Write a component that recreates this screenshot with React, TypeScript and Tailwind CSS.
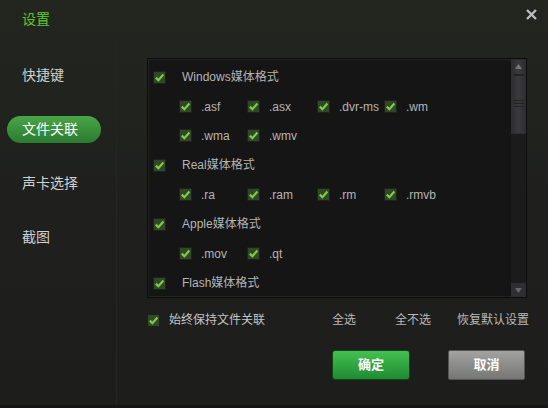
import React from "react";

const FONT = { fontFamily: '"Liberation Sans", "Noto Sans CJK SC", sans-serif' };

function Check() {
  return (
    <span className="flex h-[13px] w-[13px] shrink-0 items-center justify-center border border-[#1b2416] bg-[#33452a]">
      <svg width="11" height="11" viewBox="0 0 11 11">
        <path d="M1.8 5.6 L4.4 8.2 L9.4 2.6" fill="none" stroke="#79d13f" strokeWidth="2.2" />
      </svg>
    </span>
  );
}

const groups = [
  { title: "Windows媒体格式", rows: [[".asf", ".asx", ".dvr-ms", ".wm"], [".wma", ".wmv"]] },
  { title: "Real媒体格式", rows: [[".ra", ".ram", ".rm", ".rmvb"]] },
  { title: "Apple媒体格式", rows: [[".mov", ".qt"]] },
  { title: "Flash媒体格式", rows: [] as string[][] },
];

const colW = ["w-[68px]", "w-[70px]", "w-[67px]", "w-[68px]"];

const menu = ["快捷键", "文件关联", "声卡选择", "截图"];

export default function App() {
  return (
    <div
      className="relative flex h-[408px] w-[548px] flex-col overflow-hidden border-b-[3px] border-[#151515] bg-gradient-to-b from-[#23261f] via-[#1f201d] to-[#1d1d1b] text-[#cfcfcf]"
      style={FONT}
    >
      {/* header */}
      <div className="flex h-[40px] items-center pl-[22px] pb-[1px]">
        <span className="text-[14px] text-[#62c52d]">设置</span>
      </div>
      <button className="absolute right-[9px] top-[6px] flex h-[16px] w-[16px] items-center justify-center">
        <svg width="11" height="11" viewBox="0 0 11 11">
          <path d="M1 1 L10 10 M10 1 L1 10" stroke="#bdbdbd" strokeWidth="2.4" />
        </svg>
      </button>

      <div className="flex flex-1">
        {/* sidebar */}
        <div className="flex w-[117px] shrink-0 flex-col border-r border-[#252623] pt-[22px]">
          {menu.map((m, i) => (
            <div key={m} className="flex h-[54px] items-start">
              {i === 1 ? (
                <div className="ml-[7px] flex h-[27px] w-[94px] items-center rounded-full bg-gradient-to-b from-[#4aa548] to-[#2a7c30] pl-[15px] text-[14px] text-white">
                  {m}
                </div>
              ) : (
                <div className="flex h-[27px] items-center pl-[22px] text-[14px] text-[#d0d0d0]">{m}</div>
              )}
            </div>
          ))}
        </div>

        {/* content */}
        <div className="flex flex-col pl-[30px] pt-[18px]">
          <div className="flex h-[240px] w-[380px] border border-[#0c0c0c] bg-[#151515] shadow-[inset_0_0_0_1px_#222]">
            <div className="flex flex-1 flex-col overflow-hidden pt-[3px] text-[12px] text-[#b4b4b4]">
              {groups.map((g) => (
                <React.Fragment key={g.title}>
                  <div className="flex h-[30px] shrink-0 items-center pl-[5px]">
                    <Check />
                    <span className="ml-[16px]">{g.title}</span>
                  </div>
                  {g.rows.map((r, ri) => (
                    <div key={ri} className="flex h-[29px] shrink-0 items-center pl-[31px]">
                      {r.map((e, ei) => (
                        <div key={e} className={`flex items-center ${colW[ei]}`}>
                          <Check />
                          <span className="ml-[9px]">{e}</span>
                        </div>
                      ))}
                    </div>
                  ))}
                </React.Fragment>
              ))}
            </div>
            {/* scrollbar */}
            <div className="flex w-[15px] shrink-0 flex-col bg-[#1b1b1b]">
              <div className="flex h-[75px] flex-col items-center border border-[#2e2e2e] bg-gradient-to-r from-[#2f2f32] via-[#3a3a3e] to-[#2f2f32]">
                <svg width="7" height="5" viewBox="0 0 7 5" className="mt-[4px]">
                  <path d="M0 5 L3.5 0 L7 5 Z" fill="#777" />
                </svg>
                <div className="mt-[5px] h-[2px] w-[10px] border-y border-[#222]" />
                <div className="mt-[24px] flex flex-col gap-[2px]">
                  <div className="h-[1px] w-[10px] bg-[#222]" />
                  <div className="h-[1px] w-[10px] bg-[#222]" />
                  <div className="h-[1px] w-[10px] bg-[#222]" />
                </div>
              </div>
              <div className="flex-1" />
              <div className="flex h-[14px] items-center justify-center border border-[#2e2e2e] bg-[#2f2f33]">
                <svg width="7" height="5" viewBox="0 0 7 5">
                  <path d="M0 0 L3.5 5 L7 0 Z" fill="#666" />
                </svg>
              </div>
            </div>
          </div>

          {/* options row */}
          <div className="mt-[10px] flex h-[24px] items-center text-[12px] text-[#b8b8b8]">
            <div className="flex w-[185px] items-center">
              <Check />
              <span className="ml-[9px] text-[#c4c4c4]">始终保持文件关联</span>
            </div>
            <span className="w-[63px]">全选</span>
            <span className="w-[62px]">全不选</span>
            <span>恢复默认设置</span>
          </div>

          {/* buttons */}
          <div className="mt-[18px] flex pl-[185px]">
            <button className="flex h-[30px] w-[78px] items-center justify-center rounded-[3px] border border-[#0f4a18] bg-gradient-to-b from-[#44c050] to-[#1e8b32] text-[13px] font-bold text-white">
              确定
            </button>
            <button className="ml-[38px] flex h-[30px] w-[77px] items-center justify-center rounded-[2px] border border-[#555] bg-gradient-to-b from-[#a2a2a0] to-[#767674] text-[13px] font-bold text-white">
              取消
            </button>
          </div>
        </div>
      </div>
    </div>
  );
}
